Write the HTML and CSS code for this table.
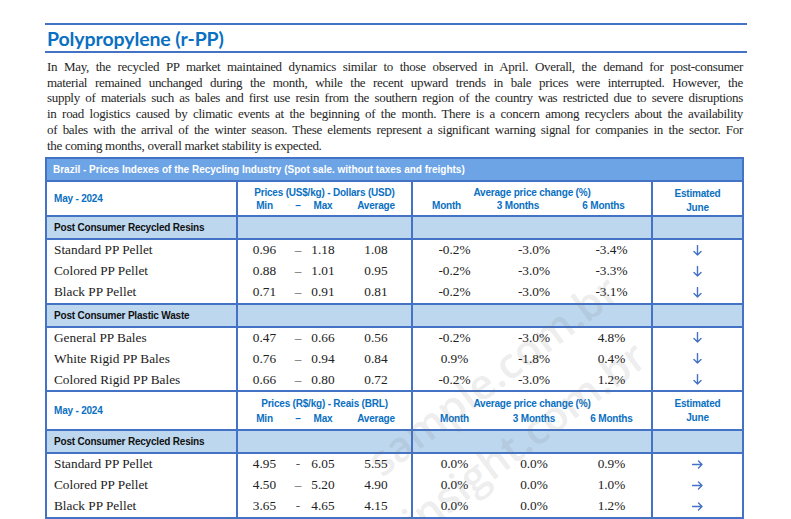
FILE: index.html
```html
<!DOCTYPE html>
<html lang="en">
<head>
<meta charset="utf-8">
<title>Polypropylene (r-PP)</title>
<link rel="stylesheet" href="styles.css">
</head>
<body>
<div class="page">
  <div class="report">
    <div class="section-head"><h1>Polypropylene (r-PP)</h1></div>
    <div class="intro">
      <span class="ln">In May, the recycled PP market maintained dynamics similar to those observed in April. Overall, the demand for post-consumer</span>
      <span class="ln">material remained unchanged during the month, while the recent upward trends in bale prices were interrupted. However, the</span>
      <span class="ln">supply of materials such as bales and first use resin from the southern region of the country was restricted due to severe disruptions</span>
      <span class="ln">in road logistics caused by climatic events at the beginning of the month. There is a concern among recyclers about the availability</span>
      <span class="ln">of bales with the arrival of the winter season. These elements represent a significant warning signal for companies in the sector. For</span>
      <span class="ln last">the coming months, overall market stability is expected.</span>
    </div>

    <table class="prices">
      <colgroup>
        <col class="c-name"><col class="c-min"><col class="c-dash"><col class="c-max"><col class="c-avg">
        <col class="c-m1"><col class="c-m3"><col class="c-m6"><col class="c-est">
      </colgroup>
      <tbody>
        <tr class="title-row"><td colspan="9">Brazil - Prices Indexes of the Recycling Industry (Spot sale. without taxes and freights)</td></tr>

        <tr class="head-top head1">
          <td rowspan="2" class="period g-end">May - 2024</td>
          <td colspan="4" class="grp g-end">Prices (US$/kg) - Dollars (USD)</td>
          <td colspan="3" class="grp g-end">Average price change (%)</td>
          <td rowspan="2" class="est-head">Estimated<br>June</td>
        </tr>
        <tr class="head-sub head1">
          <td>Min</td><td>–</td><td>Max</td><td class="g-end">Average</td>
          <td class="off-a">Month</td><td class="off-b">3 Months</td><td class="off-a g-end">6 Months</td>
        </tr>

        <tr class="sect"><td class="g-end">Post Consumer Recycled Resins</td><td colspan="4" class="g-end"></td><td colspan="3" class="g-end"></td><td></td></tr>
        <tr class="data first"><td class="g-end">Standard PP Pellet</td><td>0.96</td><td class="dash">–</td><td>1.18</td><td class="g-end">1.08</td><td>-0.2%</td><td>-3.0%</td><td class="g-end">-3.4%</td><td class="arrow"><svg width="9" height="11" viewBox="0 0 9 11"><path d="M4.5 0.5V10M1 6.5L4.5 10L8 6.5"/></svg></td></tr>
        <tr class="data"><td class="g-end">Colored PP Pellet</td><td>0.88</td><td class="dash">–</td><td>1.01</td><td class="g-end">0.95</td><td>-0.2%</td><td>-3.0%</td><td class="g-end">-3.3%</td><td class="arrow"><svg width="9" height="11" viewBox="0 0 9 11"><path d="M4.5 0.5V10M1 6.5L4.5 10L8 6.5"/></svg></td></tr>
        <tr class="data"><td class="g-end">Black PP Pellet</td><td>0.71</td><td class="dash">–</td><td>0.91</td><td class="g-end">0.81</td><td>-0.2%</td><td>-3.0%</td><td class="g-end">-3.1%</td><td class="arrow"><svg width="9" height="11" viewBox="0 0 9 11"><path d="M4.5 0.5V10M1 6.5L4.5 10L8 6.5"/></svg></td></tr>

        <tr class="sect"><td class="g-end">Post Consumer Plastic Waste</td><td colspan="4" class="g-end"></td><td colspan="3" class="g-end"></td><td></td></tr>
        <tr class="data first"><td class="g-end">General PP Bales</td><td>0.47</td><td class="dash">–</td><td>0.66</td><td class="g-end">0.56</td><td>-0.2%</td><td>-3.0%</td><td class="g-end">4.8%</td><td class="arrow"><svg width="9" height="11" viewBox="0 0 9 11"><path d="M4.5 0.5V10M1 6.5L4.5 10L8 6.5"/></svg></td></tr>
        <tr class="data"><td class="g-end">White Rigid PP Bales</td><td>0.76</td><td class="dash">–</td><td>0.94</td><td class="g-end">0.84</td><td>0.9%</td><td>-1.8%</td><td class="g-end">0.4%</td><td class="arrow"><svg width="9" height="11" viewBox="0 0 9 11"><path d="M4.5 0.5V10M1 6.5L4.5 10L8 6.5"/></svg></td></tr>
        <tr class="data"><td class="g-end">Colored Rigid PP Bales</td><td>0.66</td><td class="dash">–</td><td>0.80</td><td class="g-end">0.72</td><td>-0.2%</td><td>-3.0%</td><td class="g-end">1.2%</td><td class="arrow"><svg width="9" height="11" viewBox="0 0 9 11"><path d="M4.5 0.5V10M1 6.5L4.5 10L8 6.5"/></svg></td></tr>

        <tr class="head-top head2">
          <td rowspan="2" class="period g-end">May - 2024</td>
          <td colspan="4" class="grp g-end">Prices (R$/kg) - Reais (BRL)</td>
          <td colspan="3" class="grp g-end">Average price change (%)</td>
          <td rowspan="2" class="est-head">Estimated<br>June</td>
        </tr>
        <tr class="head-sub head2">
          <td>Min</td><td>–</td><td>Max</td><td class="g-end">Average</td>
          <td>Month</td><td>3 Months</td><td class="g-end">6 Months</td>
        </tr>

        <tr class="sect"><td class="g-end">Post Consumer Recycled Resins</td><td colspan="4" class="g-end"></td><td colspan="3" class="g-end"></td><td></td></tr>
        <tr class="data first"><td class="g-end">Standard PP Pellet</td><td>4.95</td><td class="dash">-</td><td>6.05</td><td class="g-end">5.55</td><td>0.0%</td><td>0.0%</td><td class="g-end">0.9%</td><td class="arrow"><svg width="11" height="9" viewBox="0 0 11 9"><path d="M0.5 4.5H10M6.5 1L10 4.5L6.5 8"/></svg></td></tr>
        <tr class="data"><td class="g-end">Colored PP Pellet</td><td>4.50</td><td class="dash">–</td><td>5.20</td><td class="g-end">4.90</td><td>0.0%</td><td>0.0%</td><td class="g-end">1.0%</td><td class="arrow"><svg width="11" height="9" viewBox="0 0 11 9"><path d="M0.5 4.5H10M6.5 1L10 4.5L6.5 8"/></svg></td></tr>
        <tr class="data"><td class="g-end">Black PP Pellet</td><td>3.65</td><td class="dash">-</td><td>4.65</td><td class="g-end">4.15</td><td>0.0%</td><td>0.0%</td><td class="g-end">1.2%</td><td class="arrow"><svg width="11" height="9" viewBox="0 0 11 9"><path d="M0.5 4.5H10M6.5 1L10 4.5L6.5 8"/></svg></td></tr>
      </tbody>
    </table>
  </div>

  <div class="watermark" aria-hidden="true">
    <span class="wm-line wm-1">sample.com.br</span>
    <span class="wm-line wm-2">insight.com.br</span>
  </div>
</div>
</body>
</html>
```

FILE: styles.css
```css
* { box-sizing: border-box; }

html, body {
  margin: 0;
  padding: 0;
  background: #ffffff;
}

.page {
  position: relative;
  width: 791px;
  height: 519px;
  overflow: hidden;
}

.report {
  padding: 23px 0 0 45px;
  width: 747px;
}

.section-head {
  border-top: 2px solid #4472c4;
  border-bottom: 2px solid #4472c4;
  height: 30px;
  display: flex;
  align-items: center;
  padding-left: 2px;
}

.section-head h1 {
  margin: 0;
  font-family: "Lato", "Liberation Sans", sans-serif;
  font-weight: 700;
  font-size: 19.5px;
  color: #0a70c2;
  letter-spacing: -0.1px;
}

.intro {
  margin: 6px 4px 0 2px;
  font-family: "Liberation Serif", serif;
  font-size: 13px;
  letter-spacing: -0.3px;
  line-height: 15.7px;
  color: #262626;
}

.intro .ln {
  display: block;
  text-align: justify;
  text-align-last: justify;
}

.intro .ln.last {
  text-align-last: left;
}

/* Table */
.prices {
  margin-top: 4px;
  width: 697px;
  table-layout: fixed;
  border-collapse: collapse;
  border: 2px solid #4472c4;
}

.c-name { width: 191px; }
.c-min { width: 54px; }
.c-dash { width: 14px; }
.c-max { width: 36px; }
.c-avg { width: 71px; }
.c-m1 { width: 84px; }
.c-m3 { width: 76px; }
.c-m6 { width: 80px; }
.c-est { width: 91px; }

.prices td {
  padding: 0;
  white-space: nowrap;
}

.g-end { border-right: 2px solid #4472c4; }

.title-row td {
  height: 23px;
  background: #6da4e6;
  color: #ffffff;
  font-family: "Liberation Sans", sans-serif;
  font-weight: 700;
  font-size: 10px;
  padding-left: 6px;
  border-bottom: 2px solid #4472c4;
}

.head-top td,
.head-sub td {
  font-family: "Liberation Sans", sans-serif;
  font-weight: 700;
  font-size: 10px;
  color: #0a70c2;
  text-align: center;
  letter-spacing: -0.2px;
}

.head1.head-top td { height: 18px; padding-top: 3px; }
.head1.head-sub td { height: 17px; vertical-align: top; padding-top: 1px; }
.head2.head-top td { height: 20px; padding-top: 4px; }
.head2.head-sub td { height: 19px; vertical-align: top; padding-top: 2px; }

.head-top td.period {
  text-align: left;
  padding-left: 7px;
  padding-top: 0;
  vertical-align: middle;
}

.head-top td.est-head {
  vertical-align: top;
  line-height: 14px;
  padding-top: 5px;
}

.head-sub td.off-a { padding-right: 16px; }
.head-sub td.off-b { padding-right: 32px; }

.head-top { border-top: 2px solid #4472c4; }

.sect td {
  height: 23px;
  background: #bdd7ee;
  border-top: 2px solid #4472c4;
  border-bottom: 2px solid #4472c4;
  font-family: "Liberation Sans", sans-serif;
  font-weight: 700;
  font-size: 10px;
  color: #111;
  padding-left: 7px;
  letter-spacing: -0.2px;
}

.data td {
  height: 21.5px;
  font-family: "Liberation Serif", serif;
  font-size: 13.3px;
  color: #222;
  text-align: center;
}

.data td:first-child {
  text-align: left;
  padding-left: 7px;
}

.data td.dash { color: #555; }

.arrow svg {
  display: block;
  margin: 0 auto;
  fill: none;
  stroke: #4472c4;
  stroke-width: 1.4;
  stroke-linecap: round;
  stroke-linejoin: round;
}

/* Watermark overlay */
.watermark {
  position: absolute;
  left: 0;
  top: 0;
  width: 791px;
  height: 519px;
  pointer-events: none;
}

.wm-line {
  position: absolute;
  font-family: "Open Sans", "Liberation Sans", sans-serif;
  font-size: 42px;
  font-weight: 600;
  line-height: 1;
  color: rgba(120, 120, 120, 0.15);
  white-space: nowrap;
  transform-origin: 0 100%;
  transform: rotate(-37deg);
}

.wm-1 { left: 385px; top: 440px; }
.wm-2 { left: 420px; top: 500px; }
```
